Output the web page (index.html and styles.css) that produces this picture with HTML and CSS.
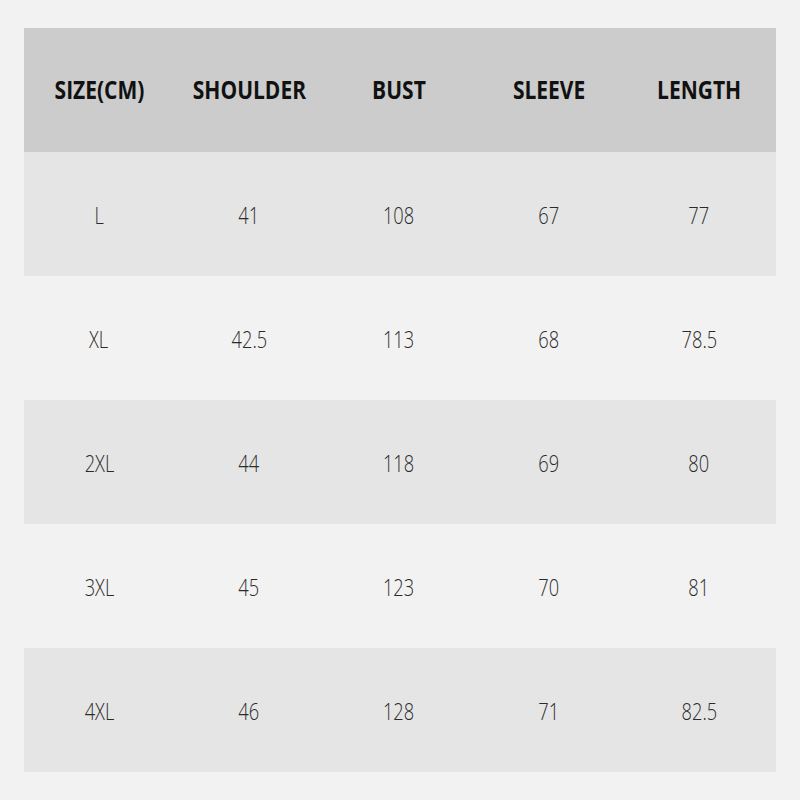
FILE: index.html
```html
<!DOCTYPE html>
<html>
<head>
<meta charset="utf-8">
<link rel="stylesheet" href="styles.css">
</head>
<body>
<div class="page">
  <div class="table">
    <div class="row head">
      <div class="cell"><span>SIZE(CM)</span></div><div class="cell"><span>SHOULDER</span></div><div class="cell"><span>BUST</span></div><div class="cell"><span>SLEEVE</span></div><div class="cell"><span>LENGTH</span></div>
    </div>
    <div class="row dark">
      <div class="cell"><span>L</span></div><div class="cell"><span>41</span></div><div class="cell"><span>108</span></div><div class="cell"><span>67</span></div><div class="cell"><span>77</span></div>
    </div>
    <div class="row light">
      <div class="cell"><span>XL</span></div><div class="cell"><span>42.5</span></div><div class="cell"><span>113</span></div><div class="cell"><span>68</span></div><div class="cell"><span>78.5</span></div>
    </div>
    <div class="row dark">
      <div class="cell"><span>2XL</span></div><div class="cell"><span>44</span></div><div class="cell"><span>118</span></div><div class="cell"><span>69</span></div><div class="cell"><span>80</span></div>
    </div>
    <div class="row light">
      <div class="cell"><span>3XL</span></div><div class="cell"><span>45</span></div><div class="cell"><span>123</span></div><div class="cell"><span>70</span></div><div class="cell"><span>81</span></div>
    </div>
    <div class="row dark">
      <div class="cell"><span>4XL</span></div><div class="cell"><span>46</span></div><div class="cell"><span>128</span></div><div class="cell"><span>71</span></div><div class="cell"><span>82.5</span></div>
    </div>
  </div>
</div>
</body>
</html>
```
FILE: styles.css
```css
html, body {
  margin: 0;
  padding: 0;
  background: #f2f2f2;
}
.page {
  width: 800px;
  height: 800px;
  box-sizing: border-box;
  padding: 28px 24px;
}
.table {
  display: flex;
  flex-direction: column;
}
.row {
  display: grid;
  grid-template-columns: repeat(5, 150px);
  height: 124px;
  width: 752px;
}
.cell {
  display: flex;
  align-items: center;
  justify-content: center;
  font-family: "Open Sans", "DejaVu Sans", sans-serif;
  font-weight: 300;
  font-size: 24px;
  color: #2a2a2a;
  padding-top: 0;
}
.cell span {
  display: inline-block;
  transform: scaleX(0.76);
  white-space: nowrap;
}
.head {
  background: #cccccc;
}
.head .cell {
  font-weight: 700;
  font-size: 25px;
  color: #111111;
  padding-bottom: 2px;
}
.head .cell span {
  transform: scaleX(0.84);
}
.dark {
  background: #e5e5e5;
}
.light {
  background: #f2f2f2;
}
```
